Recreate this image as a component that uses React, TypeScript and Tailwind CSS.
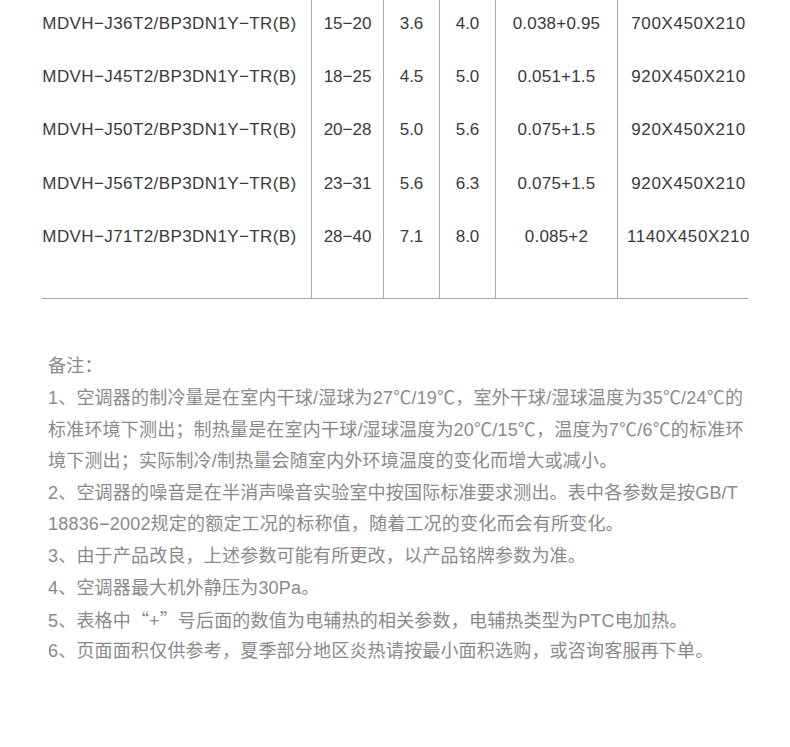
import React from "react";

const rows = [
  ["MDVH−J36T2/BP3DN1Y−TR(B)", "15−20", "3.6", "4.0", "0.038+0.95", "700X450X210"],
  ["MDVH−J45T2/BP3DN1Y−TR(B)", "18−25", "4.5", "5.0", "0.051+1.5", "920X450X210"],
  ["MDVH−J50T2/BP3DN1Y−TR(B)", "20−28", "5.0", "5.6", "0.075+1.5", "920X450X210"],
  ["MDVH−J56T2/BP3DN1Y−TR(B)", "23−31", "5.6", "6.3", "0.075+1.5", "920X450X210"],
  ["MDVH−J71T2/BP3DN1Y−TR(B)", "28−40", "7.1", "8.0", "0.085+2", "1140X450X210"],
];

const notes: React.ReactNode[] = [
  "1、空调器的制冷量是在室内干球/湿球为27℃/19℃，室外干球/湿球温度为35℃/24℃的",
  "标准环境下测出；制热量是在室内干球/湿球温度为20℃/15℃，温度为7℃/6℃的标准环",
  "境下测出；实际制冷/制热量会随室内外环境温度的变化而增大或减小。",
  "2、空调器的噪音是在半消声噪音实验室中按国际标准要求测出。表中各参数是按GB/T",
  "18836−2002规定的额定工况的标称值，随着工况的变化而会有所变化。",
  "3、由于产品改良，上述参数可能有所更改，以产品铭牌参数为准。",
  "4、空调器最大机外静压为30Pa。",
  <>
    5、表格中
    <span className="inline-block w-[18px] text-center" style={{ fontFamily: '"Noto Sans CJK SC", sans-serif' }}>“</span>
    +
    <span className="inline-block w-[18px] text-center" style={{ fontFamily: '"Noto Sans CJK SC", sans-serif' }}>”</span>
    号后面的数值为电辅热的相关参数，电辅热类型为PTC电加热。
  </>,
  "6、页面面积仅供参考，夏季部分地区炎热请按最小面积选购，或咨询客服再下单。",
];

export default function App() {
  return (
    <div
      lang="zh-CN"
      className="w-[790px] h-[747px] overflow-hidden bg-white"
      style={{ fontFamily: '"Liberation Sans", Arial, "Noto Sans CJK SC", sans-serif' }}
    >
      <div className="ml-[42px] w-[706px] -mt-[3px] border-b border-[#a8a8a8]">
        <div className="grid grid-cols-[269px_72px_56px_56px_122px_131px] text-[17px] text-[#3a3a3a]">
          {rows.map((r, i) => (
            <React.Fragment key={i}>
              <div className="h-[53.25px] flex items-center justify-center pr-[14px] tracking-[0.4px] whitespace-nowrap">
                {r[0]}
              </div>
              <div className="h-[53.25px] flex items-center justify-center border-l border-[#a8a8a8] whitespace-nowrap">
                {r[1]}
              </div>
              <div className="h-[53.25px] flex items-center justify-center border-l border-[#a8a8a8] whitespace-nowrap">
                {r[2]}
              </div>
              <div className="h-[53.25px] flex items-center justify-center border-l border-[#a8a8a8] whitespace-nowrap">
                {r[3]}
              </div>
              <div className="h-[53.25px] flex items-center justify-center border-l border-[#a8a8a8] whitespace-nowrap tracking-[0.2px]">
                {r[4]}
              </div>
              <div className="h-[53.25px] flex items-center justify-center pl-[11px] border-l border-[#a8a8a8] whitespace-nowrap tracking-[0.6px]">
                {r[5]}
              </div>
            </React.Fragment>
          ))}
          <div className="h-[35px]" />
          <div className="h-[35px] border-l border-[#a8a8a8]" />
          <div className="h-[35px] border-l border-[#a8a8a8]" />
          <div className="h-[35px] border-l border-[#a8a8a8]" />
          <div className="h-[35px] border-l border-[#a8a8a8]" />
          <div className="h-[35px] border-l border-[#a8a8a8]" />
        </div>
      </div>

      <div
        className="ml-[48px] mt-[52px] text-[18px] leading-[31.65px] tracking-[0.2px] text-[#8a8a8a]"
        style={{ fontFamily: '"Liberation Sans", "Noto Sans CJK SC", sans-serif' }}
      >
        <div className="h-[31.65px] whitespace-nowrap">备注：</div>
        {notes.map((n, i) => (
          <div key={i} className="h-[31.65px] whitespace-nowrap">
            {n}
          </div>
        ))}
      </div>
    </div>
  );
}
